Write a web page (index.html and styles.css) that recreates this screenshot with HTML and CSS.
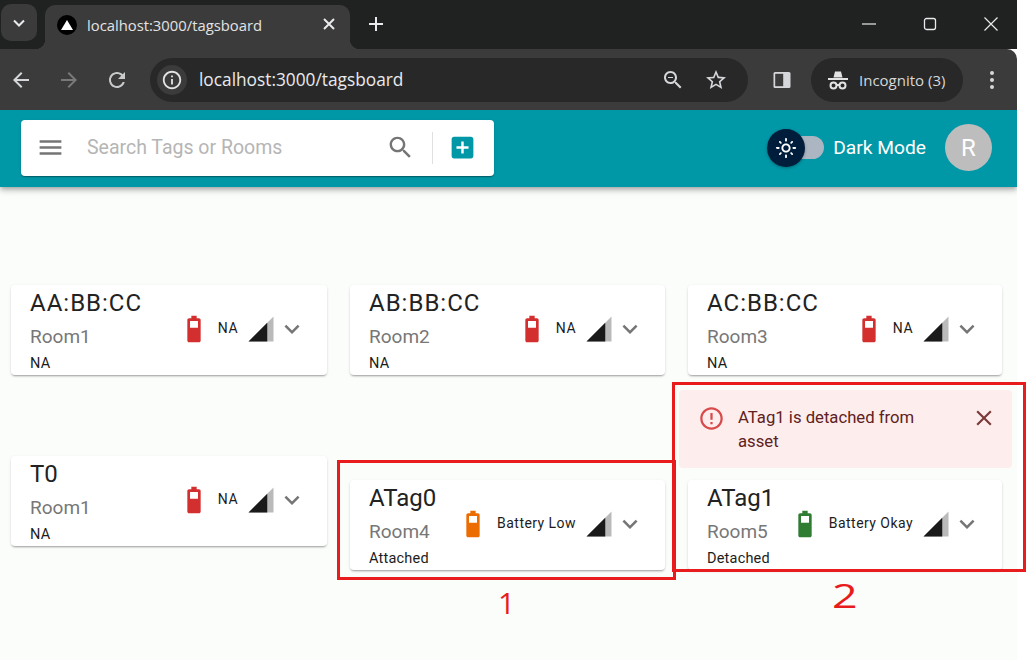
FILE: index.html
```html
<!DOCTYPE html>
<html lang="en">

<head>
  <meta charset="UTF-8">
  <meta name="viewport" content="width=device-width, initial-scale=1.0">
  <title>Tags board</title>
  <link rel="stylesheet" href="styles.css">
</head>

<body>
  <div class="shot">
    <!-- browser window -->
    <div class="tabstrip">
      <div class="tablist-btn">
        <svg width="16" height="16" viewBox="0 0 16 16"><path d="M3 5.5l5 5 5-5" fill="none" stroke="#e8eaed" stroke-width="2"/></svg>
      </div>
      <div class="tab">
        <div class="favicon"><svg width="12" height="10" viewBox="0 0 12 10"><path d="M6 0l6 10H0z" fill="#fff"/></svg></div>
        <span class="tab-title">localhost:3000/tagsboard</span>
        <svg class="tab-close" width="16" height="16" viewBox="0 0 16 16"><path d="M3 3l10 10M13 3L3 13" stroke="#e8eaed" stroke-width="2"/></svg>
      </div>
      <svg class="newtab" width="16" height="16" viewBox="0 0 16 16"><path d="M8 1v14M1 8h14" stroke="#e8eaed" stroke-width="2"/></svg>
      <div class="winctl">
        <svg width="16" height="16" viewBox="0 0 16 16"><path d="M1 8h14" stroke="#e8eaed" stroke-width="1.2"/></svg>
        <svg width="16" height="16" viewBox="0 0 16 16"><rect x="2.5" y="2.5" width="11" height="11" rx="2" fill="none" stroke="#e8eaed" stroke-width="1.3"/></svg>
        <svg width="16" height="16" viewBox="0 0 16 16"><path d="M1.5 1.5l13 13M14.5 1.5l-13 13" stroke="#e8eaed" stroke-width="1.2"/></svg>
      </div>
    </div>

    <div class="toolbar">
      <svg class="nav-icon" viewBox="0 0 24 24"><path fill="#d5d7da" d="M20 11H7.83l5.59-5.59L12 4l-8 8 8 8 1.41-1.41L7.83 13H20v-2z"/></svg>
      <svg class="nav-icon" viewBox="0 0 24 24"><path fill="#77797b" d="M4 11h12.17l-5.59-5.59L12 4l8 8-8 8-1.41-1.41L16.17 13H4v-2z"/></svg>
      <svg class="nav-icon" viewBox="0 0 24 24"><path fill="#c8cacc" d="M17.65 6.35C16.2 4.9 14.21 4 12 4c-4.42 0-7.99 3.58-7.99 8s3.57 8 7.99 8c3.73 0 6.84-2.55 7.73-6h-2.08c-.82 2.33-3.04 4-5.65 4-3.31 0-6-2.69-6-6s2.69-6 6-6c1.66 0 3.14.69 4.22 1.78L13 11h7V4l-2.35 2.35z"/></svg>
      <div class="omnibox">
        <div class="info-chip">
          <svg width="22" height="22" viewBox="0 0 24 24"><path fill="#e3e3e3" d="M11 7h2v2h-2zm0 4h2v6h-2zm1-9C6.48 2 2 6.48 2 12s4.48 10 10 10 10-4.48 10-10S17.52 2 12 2zm0 18c-4.41 0-8-3.59-8-8s3.59-8 8-8 8 3.59 8 8-3.59 8-8 8z"/></svg>
        </div>
        <span class="url">localhost:3000/tagsboard</span>
        <svg class="omni-zoom" width="24" height="24" viewBox="0 0 24 24"><path fill="#d5d7da" d="M15.5 14h-.79l-.28-.27C15.41 12.59 16 11.11 16 9.5 16 5.91 13.09 3 9.5 3S3 5.91 3 9.5 5.91 16 9.5 16c1.61 0 3.09-.59 4.23-1.57l.27.28v.79l5 4.99L20.49 19l-4.99-5zm-6 0C7.01 14 5 11.99 5 9.5S7.01 5 9.5 5 14 7.01 14 9.5 11.99 14 9.5 14zM7 9h5v1H7z"/></svg>
        <svg class="omni-star" width="24" height="24" viewBox="0 0 24 24"><path fill="#d5d7da" d="m22 9.24-7.19-.62L12 2 9.19 8.63 2 9.24l5.46 4.73L5.82 21 12 17.27 18.18 21l-1.63-7.03L22 9.24zM12 15.4l-3.76 2.27 1-4.28-3.32-2.88 4.38-.38L12 6.1l1.71 4.04 4.38.38-3.32 2.88 1 4.28L12 15.4z"/></svg>
      </div>
      <svg class="sidepanel" width="20" height="20" viewBox="0 0 20 20"><rect x="1.5" y="2" width="17" height="16" rx="1.5" fill="#d5d7da"/><rect x="3.2" y="3.8" width="8" height="12.4" fill="#3b3b3b"/></svg>
      <div class="incognito">
        <svg width="24" height="24" viewBox="0 0 24 24" fill="none" stroke="#e3e3e3" stroke-width="2"><path d="M7.5 9.5L9 3.5h6l1.5 6z" fill="#e3e3e3" stroke="none"/><path d="M2 11h20"/><circle cx="7.5" cy="17.5" r="3"/><circle cx="16.5" cy="17.5" r="3"/><path d="M10.5 17h3"/></svg>
        <span>Incognito (3)</span>
      </div>
      <svg class="menu-dots" width="6" height="20" viewBox="0 0 6 20"><circle cx="3" cy="3" r="2" fill="#d5d7da"/><circle cx="3" cy="10" r="2" fill="#d5d7da"/><circle cx="3" cy="17" r="2" fill="#d5d7da"/></svg>
    </div>

    <!-- app -->
    <header class="appbar">
      <div class="searchbox">
        <svg class="icon29 menu-icon" viewBox="0 0 24 24"><path d="M3 18h18v-2H3v2zm0-5h18v-2H3v2zm0-7v2h18V6H3z"/></svg>
        <span class="placeholder">Search Tags or Rooms</span>
        <svg class="icon29 search-icon" viewBox="0 0 24 24"><path d="M15.5 14h-.79l-.28-.27C15.41 12.59 16 11.11 16 9.5 16 5.91 13.09 3 9.5 3S3 5.91 3 9.5 5.91 16 9.5 16c1.61 0 3.09-.59 4.23-1.57l.27.28v.79l5 4.99L20.49 19l-4.99-5zm-6 0C7.01 14 5 11.99 5 9.5S7.01 5 9.5 5 14 7.01 14 9.5 11.99 14 9.5 14z"/></svg>
        <div class="divider"></div>
        <svg class="icon29 add-icon" viewBox="0 0 24 24"><path d="M19 3H5c-1.11 0-2 .9-2 2v14c0 1.1.89 2 2 2h14c1.1 0 2-.9 2-2V5c0-1.1-.9-2-2-2zm-2 10h-4v4h-2v-4H7v-2h4V7h2v4h4v2z"/></svg>
      </div>
      <div class="theme">
        <div class="switch">
          <div class="thumb">
            <svg width="22" height="22" viewBox="0 0 24 24"><path fill="#fff" d="M12 9c1.65 0 3 1.35 3 3s-1.35 3-3 3-3-1.35-3-3 1.35-3 3-3m0-2c-2.76 0-5 2.24-5 5s2.24 5 5 5 5-2.24 5-5-2.24-5-5-5zM2 13h2c.55 0 1-.45 1-1s-.45-1-1-1H2c-.55 0-1 .45-1 1s.45 1 1 1zm18 0h2c.55 0 1-.45 1-1s-.45-1-1-1h-2c-.55 0-1 .45-1 1s.45 1 1 1zM11 2v2c0 .55.45 1 1 1s1-.45 1-1V2c0-.55-.45-1-1-1s-1 .45-1 1zm0 18v2c0 .55.45 1 1 1s1-.45 1-1v-2c0-.55-.45-1-1-1s-1 .45-1 1zM5.99 4.58c-.39-.39-1.03-.39-1.41 0-.39.39-.39 1.03 0 1.41l1.06 1.06c.39.39 1.03.39 1.41 0s.39-1.03 0-1.41L5.99 4.58zm12.37 12.37c-.39-.39-1.03-.39-1.41 0-.39.39-.39 1.03 0 1.41l1.06 1.06c.39.39 1.03.39 1.41 0 .39-.39.39-1.03 0-1.41l-1.06-1.06zm1.06-10.96c.39-.39.39-1.03 0-1.41-.39-.39-1.03-.39-1.41 0l-1.06 1.06c-.39.39-.39 1.03 0 1.41s1.03.39 1.41 0l1.06-1.06zM7.05 18.36c.39-.39.39-1.03 0-1.41-.39-.39-1.03-.39-1.41 0l-1.06 1.06c-.39.39-.39 1.03 0 1.41s1.03.39 1.41 0l1.06-1.06z"/></svg>
          </div>
        </div>
        <span class="theme-label">Dark Mode</span>
      </div>
      <div class="avatar">R</div>
    </header>

    <main class="board">
      <div class="card">
        <div class="card-text"><div class="tag tag-mac">AA:BB:CC</div><div class="room">Room1</div><div class="state">NA</div></div>
        <div class="card-status">
          <svg class="battery bat-red" viewBox="0 0 24 24"><path fill-rule="evenodd" d="M15.67 4H14V2h-4v2H8.33C7.6 4 7 4.6 7 5.33v15.34C7 21.4 7.6 22 8.33 22h7.34c.73 0 1.33-.6 1.33-1.33V5.33C17 4.6 16.4 4 15.67 4zM15 6H9v5h6z"/></svg>
          <span class="bat-text">NA</span>
          <svg class="signal" viewBox="0 0 24 24"><path fill-opacity=".3" d="M2 22h20V2z"/><path d="M17 7L2 22h15z"/></svg>
          <svg class="chevron" viewBox="0 0 24 24"><path d="M16.59 8.59 12 13.17 7.41 8.59 6 10l6 6 6-6z"/></svg>
        </div>
      </div>
      <div class="card">
        <div class="card-text"><div class="tag tag-mac">AB:BB:CC</div><div class="room">Room2</div><div class="state">NA</div></div>
        <div class="card-status">
          <svg class="battery bat-red" viewBox="0 0 24 24"><path fill-rule="evenodd" d="M15.67 4H14V2h-4v2H8.33C7.6 4 7 4.6 7 5.33v15.34C7 21.4 7.6 22 8.33 22h7.34c.73 0 1.33-.6 1.33-1.33V5.33C17 4.6 16.4 4 15.67 4zM15 6H9v5h6z"/></svg>
          <span class="bat-text">NA</span>
          <svg class="signal" viewBox="0 0 24 24"><path fill-opacity=".3" d="M2 22h20V2z"/><path d="M17 7L2 22h15z"/></svg>
          <svg class="chevron" viewBox="0 0 24 24"><path d="M16.59 8.59 12 13.17 7.41 8.59 6 10l6 6 6-6z"/></svg>
        </div>
      </div>
      <div class="card">
        <div class="card-text"><div class="tag tag-mac">AC:BB:CC</div><div class="room">Room3</div><div class="state">NA</div></div>
        <div class="card-status">
          <svg class="battery bat-red" viewBox="0 0 24 24"><path fill-rule="evenodd" d="M15.67 4H14V2h-4v2H8.33C7.6 4 7 4.6 7 5.33v15.34C7 21.4 7.6 22 8.33 22h7.34c.73 0 1.33-.6 1.33-1.33V5.33C17 4.6 16.4 4 15.67 4zM15 6H9v5h6z"/></svg>
          <span class="bat-text">NA</span>
          <svg class="signal" viewBox="0 0 24 24"><path fill-opacity=".3" d="M2 22h20V2z"/><path d="M17 7L2 22h15z"/></svg>
          <svg class="chevron" viewBox="0 0 24 24"><path d="M16.59 8.59 12 13.17 7.41 8.59 6 10l6 6 6-6z"/></svg>
        </div>
      </div>

      <div class="slot-t0">
        <div class="card">
          <div class="card-text"><div class="tag">T0</div><div class="room">Room1</div><div class="state">NA</div></div>
          <div class="card-status">
            <svg class="battery bat-red" viewBox="0 0 24 24"><path fill-rule="evenodd" d="M15.67 4H14V2h-4v2H8.33C7.6 4 7 4.6 7 5.33v15.34C7 21.4 7.6 22 8.33 22h7.34c.73 0 1.33-.6 1.33-1.33V5.33C17 4.6 16.4 4 15.67 4zM15 6H9v5h6z"/></svg>
            <span class="bat-text">NA</span>
            <svg class="signal" viewBox="0 0 24 24"><path fill-opacity=".3" d="M2 22h20V2z"/><path d="M17 7L2 22h15z"/></svg>
            <svg class="chevron" viewBox="0 0 24 24"><path d="M16.59 8.59 12 13.17 7.41 8.59 6 10l6 6 6-6z"/></svg>
          </div>
        </div>
      </div>
      <div class="slot-atag">
        <div class="card">
          <div class="card-text"><div class="tag">ATag0</div><div class="room">Room4</div><div class="state">Attached</div></div>
          <div class="card-status">
            <svg class="battery bat-orange" viewBox="0 0 24 24"><path fill-rule="evenodd" d="M15.67 4H14V2h-4v2H8.33C7.6 4 7 4.6 7 5.33v15.34C7 21.4 7.6 22 8.33 22h7.34c.73 0 1.33-.6 1.33-1.33V5.33C17 4.6 16.4 4 15.67 4zM15 6H9v5h6z"/></svg>
            <span class="bat-text">Battery Low</span>
            <svg class="signal" viewBox="0 0 24 24"><path fill-opacity=".3" d="M2 22h20V2z"/><path d="M17 7L2 22h15z"/></svg>
            <svg class="chevron" viewBox="0 0 24 24"><path d="M16.59 8.59 12 13.17 7.41 8.59 6 10l6 6 6-6z"/></svg>
          </div>
        </div>
      </div>
      <div class="slot-alert">
        <div class="alert">
          <svg class="alert-icon" viewBox="0 0 24 24"><path d="M11 15h2v2h-2zm0-8h2v6h-2zm.99-5C6.47 2 2 6.48 2 12s4.47 10 9.99 10C17.52 22 22 17.52 22 12S17.52 2 11.99 2zM12 20c-4.42 0-8-3.58-8-8s3.58-8 8-8 8 3.58 8 8-3.58 8-8 8z"/></svg>
          <span class="alert-msg">ATag1 is detached from asset</span>
          <svg class="alert-close" viewBox="0 0 24 24"><path d="M19 6.41 17.59 5 12 10.59 6.41 5 5 6.41 10.59 12 5 17.59 6.41 19 12 13.41 17.59 19 19 17.59 13.41 12z"/></svg>
        </div>
        <div class="card">
          <div class="card-text"><div class="tag">ATag1</div><div class="room">Room5</div><div class="state">Detached</div></div>
          <div class="card-status">
            <svg class="battery bat-green" viewBox="0 0 24 24"><path fill-rule="evenodd" d="M15.67 4H14V2h-4v2H8.33C7.6 4 7 4.6 7 5.33v15.34C7 21.4 7.6 22 8.33 22h7.34c.73 0 1.33-.6 1.33-1.33V5.33C17 4.6 16.4 4 15.67 4zM15 6H9v5h6z"/></svg>
            <span class="bat-text">Battery Okay</span>
            <svg class="signal" viewBox="0 0 24 24"><path fill-opacity=".3" d="M2 22h20V2z"/><path d="M17 7L2 22h15z"/></svg>
            <svg class="chevron" viewBox="0 0 24 24"><path d="M16.59 8.59 12 13.17 7.41 8.59 6 10l6 6 6-6z"/></svg>
          </div>
        </div>
      </div>
    </main>

    <!-- red marks drawn on top of the screenshot -->
    <div class="mark mark-1"></div>
    <div class="mark mark-2"></div>
    <span class="mark-num num-1">1</span>
    <span class="mark-num num-2">2</span>
  </div>
</body>

</html>
```

FILE: styles.css
```css
html,
body {
  margin: 0;
  height: 100%;
  background-color: #fff;
  overflow: hidden;
}

.shot {
  width: 1017px;
  height: 660px;
  background-color: #fbfdfb;
  font-family: Roboto, sans-serif;
}

/* browser */
.tabstrip {
  height: 49px;
  background-color: #202221;
  display: flex;
  align-items: flex-end;
  color: #e8eaed;
}

.tablist-btn {
  width: 36px;
  height: 37px;
  margin: 0 0 8px 1px;
  background-color: #3b3b3b;
  border-radius: 10px;
  display: flex;
  align-items: center;
  justify-content: center;
}

.tab {
  width: 305px;
  height: 44px;
  margin-left: 8px;
  box-sizing: border-box;
  padding: 0 13px 5px 12px;
  background-color: #3b3b3b;
  border-radius: 10px 10px 0 0;
  display: flex;
  align-items: center;
  position: relative;
}

/* the small flares at the foot of the active tab */
.tab::before,
.tab::after {
  content: "";
  position: absolute;
  bottom: 0;
  width: 10px;
  height: 10px;
}

.tab::before {
  left: -10px;
  background: radial-gradient(circle at 0 0, #202221 10px, #3b3b3b 10.5px);
}

.tab::after {
  right: -10px;
  background: radial-gradient(circle at 100% 0, #202221 10px, #3b3b3b 10.5px);
}

.favicon {
  width: 20px;
  height: 20px;
  border-radius: 50%;
  background-color: #000;
  display: flex;
  align-items: center;
  justify-content: center;
}

.tab-title {
  margin-left: 10px;
  font-family: "Open Sans", sans-serif;
  font-size: 14.8px;
  color: #e3e3e3;
  flex: 1;
}

.tab-close {
  margin-bottom: 1px;
}

.newtab {
  margin: 0 0 17px 18px;
}

.winctl {
  margin: 0 18px 17px auto;
  display: flex;
  gap: 45px;
}

.toolbar {
  height: 61px;
  background-color: #3b3b3b;
  border-radius: 0 10px 0 0;
  display: flex;
  align-items: center;
  color: #e8eaed;
}

.nav-icon {
  width: 24px;
  height: 24px;
  margin-left: 9px;
  margin-right: 15px;
}

.omnibox {
  width: 598px;
  height: 44px;
  margin-left: 6px;
  background-color: #282828;
  border-radius: 22px;
  display: flex;
  align-items: center;
}

.info-chip {
  width: 30px;
  height: 30px;
  margin-left: 7px;
  border-radius: 50%;
  background-color: #3b3b3b;
  display: flex;
  align-items: center;
  justify-content: center;
}

.url {
  margin-left: 12px;
  font-family: "Open Sans", sans-serif;
  font-size: 17.3px;
  color: #e8eaed;
  flex: 1;
}

.omni-star {
  margin: 0 20px 0 19px;
}

.sidepanel {
  margin-left: 24px;
}

.incognito {
  width: 152px;
  height: 44px;
  margin-left: 19px;
  box-sizing: border-box;
  padding-left: 15px;
  background-color: #282828;
  border-radius: 22px;
  display: flex;
  align-items: center;
  font-family: "Open Sans", sans-serif;
  font-size: 15px;
  color: #d5d7da;
}

.incognito span {
  margin-left: 9px;
}

.menu-dots {
  margin-left: 26px;
}

/* app bar */
.appbar {
  height: 77px;
  background-color: #0097a7;
  box-shadow: 0 2px 4px -1px rgba(0, 0, 0, .2), 0 4px 5px rgba(0, 0, 0, .14), 0 1px 10px rgba(0, 0, 0, .12);
  clip-path: inset(0 0 -20px 0);
  display: flex;
  align-items: center;
  box-sizing: border-box;
  padding: 0 25px 2px 21px;
}

.searchbox {
  width: 473px;
  height: 56px;
  background-color: #fff;
  border-radius: 4px;
  box-shadow: 0 2px 1px -1px rgba(0, 0, 0, .2), 0 1px 1px rgba(0, 0, 0, .14), 0 1px 3px rgba(0, 0, 0, .12);
  display: flex;
  align-items: center;
}

.icon29 {
  width: 29px;
  height: 29px;
  flex: none;
}

.menu-icon {
  margin-left: 15px;
  fill: #757575;
}

.placeholder {
  margin-left: 22px;
  font-size: 19.5px;
  color: #b5b5b5;
  flex: 1;
}

.search-icon {
  margin-right: -2px;
  fill: #757575;
}

.divider {
  width: 1px;
  height: 32px;
  margin: 0 15px 0 19px;
  background-color: #e0e0e0;
}

.add-icon {
  margin-right: 17px;
  fill: #0097a7;
}

.theme {
  margin-left: auto;
  display: flex;
  align-items: center;
}

.switch {
  width: 57px;
  height: 23px;
  background-color: #abb6c2;
  border-radius: 12px;
  display: flex;
  align-items: center;
}

.thumb {
  width: 38px;
  height: 38px;
  border-radius: 50%;
  background-color: #001e3c;
  display: flex;
  align-items: center;
  justify-content: center;
  flex: none;
  box-shadow: 0 1px 3px rgba(0, 0, 0, .3);
}

.theme-label {
  margin-left: 9px;
  font-size: 19.2px;
  color: #fff;
}

.avatar {
  width: 47px;
  height: 47px;
  margin-left: 19px;
  border-radius: 50%;
  background-color: #bdbdbd;
  color: #fff;
  font-size: 24px;
  display: flex;
  align-items: center;
  justify-content: center;
}

/* cards */
.board {
  padding: 98px 0 0 11px;
  display: grid;
  grid-template-columns: 316px 315px 314px;
  column-gap: 23px;
  row-gap: 15px;
  align-items: start;
}

.card {
  height: 90px;
  box-sizing: border-box;
  padding: 0 23px 0 19px;
  background-color: #fff;
  border-radius: 4px;
  box-shadow: 0 2px 2px -1px rgba(0, 0, 0, .3), 0 1px 3px rgba(0, 0, 0, .12);
  display: flex;
  justify-content: space-between;
  overflow: hidden;
}

.card-text {
  display: flex;
  flex-direction: column;
}

.tag {
  margin-top: 4px;
  font-size: 24px;
  line-height: 29px;
  color: #222;
}

.tag-mac {
  letter-spacing: 1px;
}

.room {
  margin-top: 7px;
  font-size: 19px;
  line-height: 24px;
  color: #777;
}

.state {
  margin-top: 7px;
  font-size: 14.5px;
  letter-spacing: .2px;
  line-height: 15px;
  color: #1c1c1c;
}

.card-status {
  height: 90px;
  display: flex;
  align-items: center;
  padding-bottom: 2px;
  box-sizing: border-box;
}

.battery {
  width: 32px;
  height: 32px;
  margin: 0 8px 0 0;
}

.bat-red { fill: #d32f2f; }
.bat-orange { fill: #ed6c02; }
.bat-green { fill: #2e7d32; }

.bat-text {
  margin: -3px 8px 0 0;
  font-size: 14px;
  letter-spacing: .45px;
  color: #1c1c1c;
  white-space: nowrap;
}

.signal {
  width: 30px;
  height: 30px;
  fill: #1a1a1a;
  margin-right: 1px;
}

.chevron {
  width: 30px;
  height: 30px;
  fill: #757575;
  margin-right: -3px;
}

.slot-t0 {
  margin-top: 66px;
}

.slot-atag {
  margin-top: 90px;
}

.alert {
  height: 78px;
  margin: 0 -10px 12px -9px;
  box-sizing: border-box;
  padding: 15px 15px 0 19px;
  background-color: #fdeded;
  border-radius: 4px;
  color: #5f2120;
  font-size: 16.7px;
  line-height: 24px;
  display: flex;
  align-items: flex-start;
}

.alert-icon {
  width: 27px;
  height: 27px;
  flex: none;
  margin-right: 13px;
  fill: #d32f2f;
  opacity: .85;
}

.alert-msg {
  width: 200px;
  flex: none;
  margin-top: 1px;
}

.alert-close {
  width: 26px;
  height: 26px;
  margin-left: auto;
  fill: #7a3a3a;
}

/* annotation marks */
.mark {
  position: absolute;
  box-sizing: border-box;
  border: 3px solid #e81c1c;
}

.mark-1 {
  left: 337px;
  top: 460px;
  width: 339px;
  height: 120px;
}

.mark-2 {
  left: 672px;
  top: 382px;
  width: 354px;
  height: 190px;
}

.mark-num {
  position: absolute;
  font-family: "Open Sans", sans-serif;
  font-weight: 400;
  color: #e81c1c;
  line-height: 1;
}

.num-1 {
  left: 498px;
  top: 588px;
  font-size: 30px;
}

.num-2 {
  left: 832px;
  top: 580px;
  font-size: 32px;
  transform: scaleX(1.4);
  transform-origin: left;
}
```
